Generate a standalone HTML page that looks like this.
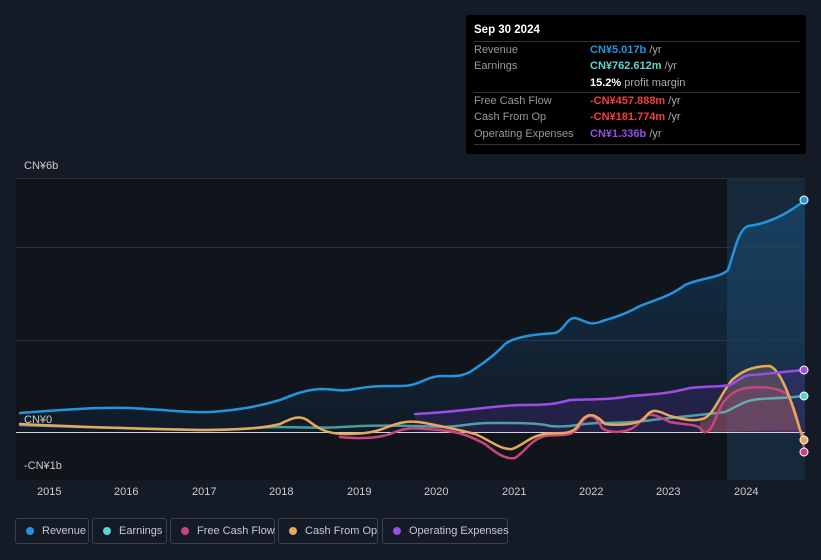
<!DOCTYPE html>
<html><head><meta charset="utf-8"><style>
body{margin:0;width:821px;height:560px;background:#151b26;font-family:"Liberation Sans",sans-serif;overflow:hidden;position:relative}
.tt{position:absolute;left:466px;top:15px;width:340px;height:139px;background:#000;border-radius:2px;color:#fff;font-size:11px}
.tt .h{position:absolute;left:8px;top:9px;font-size:11.5px;font-weight:bold}
.row{position:absolute;left:8px;width:326px;border-top:1px solid #333}
.row>span{position:absolute;top:2px;white-space:nowrap}
.l{left:0;color:#999}.v{left:116px;font-weight:bold}
.u{color:#aaa;font-weight:normal}
.leg{position:absolute;top:518px;height:26px;border:1px solid #3b414c;border-radius:3px;color:#c6c9ce;font-size:11px;line-height:24px;box-sizing:border-box;white-space:nowrap}
.leg i{position:absolute;left:10px;top:8px;width:8px;height:8px;border-radius:50%}
.leg span{position:absolute;left:26px}
.ax{position:absolute;color:#ccc;font-size:11px}
</style></head><body>
<svg width="821" height="560" style="position:absolute;left:0;top:0">
<defs>
<linearGradient id="rg" x1="0" x2="0" y1="0" y2="1"><stop offset="0" stop-color="#1b6aa8" stop-opacity=".35"/><stop offset="1" stop-color="#1b6aa8" stop-opacity=".08"/></linearGradient></defs>
<rect x="16" y="178" width="789" height="302" fill="#10141b"/>
<rect x="727" y="178" width="78" height="302" fill="#16293a"/>
<g stroke="#2a2f38" stroke-width="1"><line x1="16" x2="805" y1="178.5" y2="178.5"/><line x1="16" x2="805" y1="247.5" y2="247.5"/><line x1="16" x2="805" y1="340.5" y2="340.5"/></g>
<path d="M20,413 C60,410 100,407 130,408 C170,410 190,413 210,412 C240,410 260,406 280,400 C295,394 305,390 320,389 C335,389 340,392 355,389 C370,386 380,386 400,386 C420,386 425,377 440,376 C455,376 460,377 470,372 C485,362 495,355 505,344 C515,336 540,334 555,333 C565,330 566,318 575,318 C585,320 588,326 600,322 C610,318 620,317 640,306 C660,298 670,296 685,285 C700,278 720,278 728,270 C735,250 738,230 748,226 C765,224 785,216 805,200 L805,432 L20,432Z" fill="url(#rg)"/>
<path d="M415,414 C460,412 490,406 520,405 C550,405 555,404 570,400 C590,399 610,400 630,396 C660,394 670,393 690,388 C710,386 720,387 730,385 C740,380 742,376 750,375 C770,374 790,371 805,370 L805,432 L415,432Z" fill="#5b2f9e" fill-opacity=".25"/>
<path d="M700,420 C715,415 720,390 735,378 C750,368 760,366 770,366 C780,370 790,395 800,430 L700,432Z" fill="#e8a85c" fill-opacity=".2"/>
<path d="M700,424 C720,420 725,395 740,388 C755,384 770,385 780,390 C795,400 800,420 805,452 L805,432 L700,432Z" fill="#c9457e" fill-opacity=".2"/>
<line x1="16" x2="805" y1="432.5" y2="432.5" stroke="#d0d4da" stroke-width="1"/>
<g fill="none" stroke-width="2.5" stroke-linecap="round">
<path d="M20,425 C80,427 150,429 200,430 C240,430 260,427 280,427 C320,428 330,428 360,426 C390,425 420,426 440,427 C460,427 470,423 490,423 C520,423 540,423 550,426 C570,428 580,423 600,423 C620,423 640,422 660,419 C690,416 700,415 725,412 C740,405 745,400 760,399 C780,398 795,397 805,396" stroke="#5fd4cf" stroke-opacity=".7"/>
<path d="M340,437 C360,439 380,439 395,432 C410,426 420,429 440,430 C460,432 470,436 485,444 C495,452 505,460 515,458 C525,452 530,440 545,436 C560,434 570,438 578,428 C588,410 595,414 602,428 C610,434 630,434 640,422 C648,410 655,415 670,422 C685,425 695,424 700,428 C705,436 710,432 715,420 C722,400 730,392 745,388 C765,386 780,388 788,395 C796,410 800,430 805,452" stroke="#c9457e"/>
<path d="M20,424 C80,427 150,429 200,430 C240,430 265,428 280,424 C292,418 300,414 310,422 C320,430 330,434 345,434 C365,434 375,432 385,428 C400,422 410,420 425,423 C445,427 460,430 475,434 C490,440 500,450 512,449 C522,446 530,436 545,434 C560,432 570,436 578,426 C588,408 597,416 605,424 C620,426 640,424 645,418 C652,406 660,412 670,416 C685,420 695,422 705,418 C715,412 720,395 732,380 C745,368 758,366 770,366 C780,370 790,395 800,430 L805,440" stroke="#e8a85c"/>
<path d="M415,414 C460,412 490,406 520,405 C550,405 555,404 570,400 C590,399 610,400 630,396 C660,394 670,393 690,388 C710,386 720,387 730,385 C740,380 742,376 750,375 C770,374 790,371 805,370" stroke="#9b4de6"/>
<path d="M20,413 C60,410 100,407 130,408 C170,410 190,413 210,412 C240,410 260,406 280,400 C295,394 305,390 320,389 C335,389 340,392 355,389 C370,386 380,386 400,386 C420,386 425,377 440,376 C455,376 460,377 470,372 C485,362 495,355 505,344 C515,336 540,334 555,333 C565,330 566,318 575,318 C585,320 588,326 600,322 C610,318 620,317 640,306 C660,298 670,296 685,285 C700,278 720,278 728,270 C735,250 738,230 748,226 C765,224 785,216 805,200" stroke="#2394df"/>
</g>
<g stroke="#fff" stroke-width="1"><circle cx="804" cy="200" r="4" fill="#2394df"/><circle cx="804" cy="370" r="4" fill="#9b4de6"/><circle cx="804" cy="396" r="4" fill="#5fd4cf"/><circle cx="804" cy="440" r="4" fill="#e8a85c"/><circle cx="804" cy="452" r="4" fill="#c9457e"/></g>
</svg>
<div class="ax" style="left:24px;top:160px">CN¥6b</div>
<div class="ax" style="left:24px;top:414px">CN¥0</div>
<div class="ax" style="left:24px;top:460px">-CN¥1b</div>
<div class="ax" style="left:37px;top:486px">2015</div><div class="ax" style="left:114px;top:486px">2016</div><div class="ax" style="left:192px;top:486px">2017</div><div class="ax" style="left:269px;top:486px">2018</div><div class="ax" style="left:347px;top:486px">2019</div><div class="ax" style="left:424px;top:486px">2020</div><div class="ax" style="left:502px;top:486px">2021</div><div class="ax" style="left:579px;top:486px">2022</div><div class="ax" style="left:656px;top:486px">2023</div><div class="ax" style="left:734px;top:486px">2024</div>
<div class="tt"><div class="h">Sep 30 2024</div>
<div class="row" style="top:26px;height:17px"><span class="l">Revenue</span><span class="v" style="color:#2394df">CN¥5.017b <span class="u">/yr</span></span></div>
<div class="row" style="top:43px;height:34px;border-top:none"><span class="l">Earnings</span><span class="v" style="color:#5fd4cf">CN¥762.612m <span class="u">/yr</span></span><span class="v" style="top:19px;color:#fff">15.2% <span class="u">profit margin</span></span></div>
<div class="row" style="top:77px;height:17px"><span class="l">Free Cash Flow</span><span class="v" style="color:#f0413f">-CN¥457.888m <span class="u">/yr</span></span></div>
<div class="row" style="top:94px;height:17px;border-top:none"><span class="l">Cash From Op</span><span class="v" style="color:#f0413f">-CN¥181.774m <span class="u">/yr</span></span></div>
<div class="row" style="top:111px;height:18px;border-top:none;border-bottom:1px solid #333"><span class="l">Operating Expenses</span><span class="v" style="color:#9b4de6">CN¥1.336b <span class="u">/yr</span></span></div>
</div>
<div class="leg" style="left:15px;width:74px"><i style="background:#2394df"></i><span>Revenue</span></div>
<div class="leg" style="left:92px;width:75px"><i style="background:#5fd4cf"></i><span>Earnings</span></div>
<div class="leg" style="left:170px;width:105px"><i style="background:#c9457e"></i><span>Free Cash Flow</span></div>
<div class="leg" style="left:278px;width:100px"><i style="background:#e8a85c"></i><span>Cash From Op</span></div>
<div class="leg" style="left:382px;width:126px"><i style="background:#9b4de6"></i><span>Operating Expenses</span></div>
</body></html>
